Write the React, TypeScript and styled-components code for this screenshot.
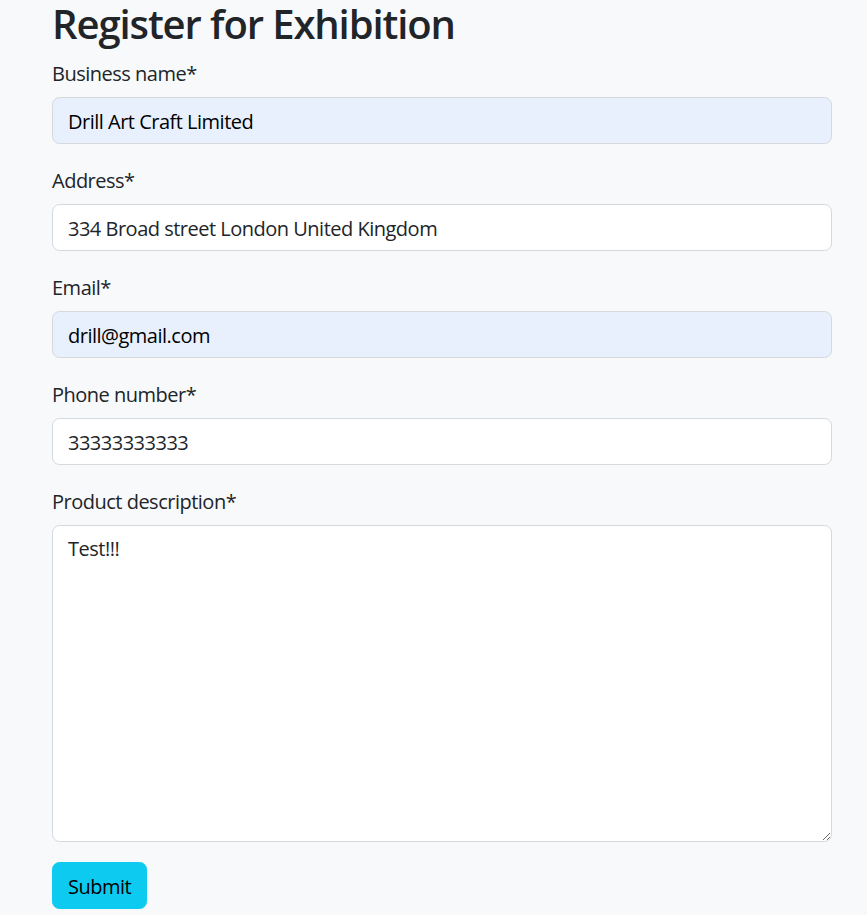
import React from "react";
import styled, { createGlobalStyle } from "styled-components";

const Global = createGlobalStyle`
  html, body { margin: 0; padding: 0; background: #f8f9fa; }
  body {
    font-family: "Open Sans", "Noto Sans", sans-serif;
    font-size: 20px;
    line-height: 1.5;
    color: #212529;
  }
  * { box-sizing: border-box; }
`;

const Page = styled.div`
  width: 780px;
  margin-left: 52px;
  padding-bottom: 20px;
`;

const Title = styled.h1`
  margin: 0 0 10px 0;
  padding-top: 1px;
  font-size: 40px;
  font-weight: 600;
  line-height: 46px;
  letter-spacing: -1.1px;
  color: #212529;
`;

const Group = styled.div`
  margin-bottom: 20px;
  display: flex;
  flex-direction: column;
`;

const Label = styled.label`
  display: block;
  margin-bottom: 8px;
  padding-top: 2px;
  font-size: 20px;
  line-height: 30px;
  letter-spacing: -0.5px;
  color: #212529;
`;

const Field = styled.input<{ $filled?: boolean }>`
  display: block;
  width: 100%;
  height: 47px;
  padding: 8px 15px 6px;
  font: inherit;
  font-size: 20px;
  line-height: 30px;
  letter-spacing: -0.5px;
  color: ${(p) => (p.$filled ? "#000" : "#212529")};
  background: ${(p) => (p.$filled ? "#e8f0fe" : "#fff")};
  border: 1px solid #d5d8dc;
  border-radius: 7.5px;
  outline: none;
`;

const Area = styled.textarea`
  display: block;
  width: 100%;
  height: 317px;
  padding: 8px 15px 6px;
  font: inherit;
  font-size: 20px;
  line-height: 30px;
  letter-spacing: -0.5px;
  color: #212529;
  background: #fff;
  border: 1px solid #d5d8dc;
  border-radius: 7.5px;
  outline: none;
  resize: vertical;
`;

const Button = styled.button`
  display: inline-block;
  height: 47px;
  padding: 8px 15px 6px;
  font: inherit;
  font-size: 20px;
  line-height: 30px;
  letter-spacing: -0.5px;
  color: #000;
  background: #0dcaf0;
  border: 1px solid #0dcaf0;
  border-radius: 7.5px;
  cursor: pointer;
`;

export default function App() {
  return (
    <>
      <Global />
      <Page>
        <Title>Register for Exhibition</Title>
        <Group>
          <Label>Business name*</Label>
          <Field $filled defaultValue="Drill Art Craft Limited" />
        </Group>
        <Group>
          <Label>Address*</Label>
          <Field defaultValue="334 Broad street London United Kingdom" />
        </Group>
        <Group>
          <Label>Email*</Label>
          <Field $filled defaultValue="drill@gmail.com" />
        </Group>
        <Group>
          <Label>Phone number*</Label>
          <Field defaultValue="33333333333" />
        </Group>
        <Group>
          <Label>Product description*</Label>
          <Area defaultValue="Test!!!" />
        </Group>
        <Button type="button">Submit</Button>
      </Page>
    </>
  );
}
